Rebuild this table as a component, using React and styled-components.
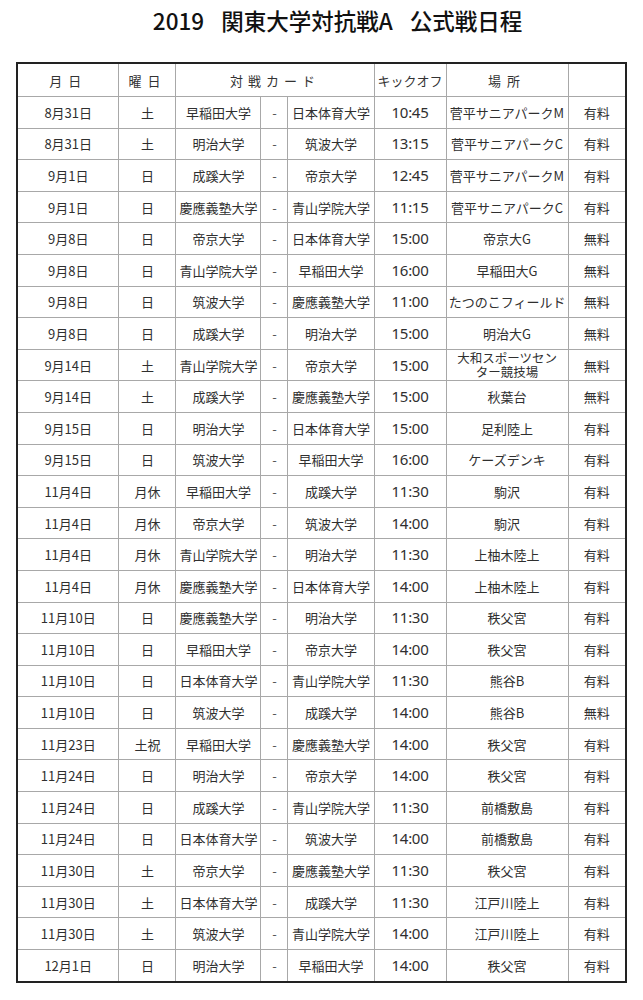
import React from 'react';
import styled, { createGlobalStyle } from 'styled-components';

const GlobalStyle = createGlobalStyle`
  body {
    margin: 0;
    background: #fff;
    font-family: "Noto Sans CJK JP", "Noto Sans", sans-serif;
    color: #2a2a2a;
  }
`;

const Page = styled.div`
  padding-top: 7px;
`;

const Title = styled.h1`
  margin: 0 0 28px 0;
  padding-left: 32px;
  text-align: center;
  font-size: 22.5px;
  line-height: 27px;
  font-weight: 500;
  color: #111;
  white-space: nowrap;
`;

const Gap = styled.span`
  display: inline-block;
  width: 17px;
`;

const Table = styled.table`
  margin: 0 auto;
  width: 609px;
  border-collapse: collapse;
  table-layout: fixed;
  border: 2px solid #222;
  font-size: 13px;
`;

const HeadCell = styled.th`
  height: 32px;
  padding: 0;
  font-weight: 400;
  border: 1px solid #a8a8a8;
  text-align: center;
  color: #333;
  letter-spacing: ${(p) => p.$spread || 0};
  white-space: nowrap;
`;

const Cell = styled.td`
  height: 30.6px;
  padding: 0;
  border: 1px solid #a8a8a8;
  text-align: center;
  white-space: nowrap;
  line-height: 15px;
  color: #2f2f2f;
`;

const Time = styled(Cell)`
  font-family: "Noto Sans", sans-serif;
  font-size: 15px;
  letter-spacing: -0.3px;
`;

const Dash = styled(Cell)`
  color: #555;
`;

const Place = styled(Cell)`
  font-size: ${(p) => (p.$twoLine ? '12.5px' : '13px')};
  line-height: ${(p) => (p.$twoLine ? '14.5px' : '15px')};
`;

const cols = [102, 57, 85, 27, 86, 72, 122, 58];

const matches = [
  ['8月31日', '土', '早稲田大学', '日本体育大学', '10:45', '菅平サニアパークM', '有料'],
  ['8月31日', '土', '明治大学', '筑波大学', '13:15', '菅平サニアパークC', '有料'],
  ['9月1日', '日', '成蹊大学', '帝京大学', '12:45', '菅平サニアパークM', '有料'],
  ['9月1日', '日', '慶應義塾大学', '青山学院大学', '11:15', '菅平サニアパークC', '有料'],
  ['9月8日', '日', '帝京大学', '日本体育大学', '15:00', '帝京大G', '無料'],
  ['9月8日', '日', '青山学院大学', '早稲田大学', '16:00', '早稲田大G', '無料'],
  ['9月8日', '日', '筑波大学', '慶應義塾大学', '11:00', 'たつのこフィールド', '無料'],
  ['9月8日', '日', '成蹊大学', '明治大学', '15:00', '明治大G', '無料'],
  ['9月14日', '土', '青山学院大学', '帝京大学', '15:00', ['大和スポーツセン', 'ター競技場'], '無料'],
  ['9月14日', '土', '成蹊大学', '慶應義塾大学', '15:00', '秋葉台', '無料'],
  ['9月15日', '日', '明治大学', '日本体育大学', '15:00', '足利陸上', '有料'],
  ['9月15日', '日', '筑波大学', '早稲田大学', '16:00', 'ケーズデンキ', '有料'],
  ['11月4日', '月休', '早稲田大学', '成蹊大学', '11:30', '駒沢', '有料'],
  ['11月4日', '月休', '帝京大学', '筑波大学', '14:00', '駒沢', '有料'],
  ['11月4日', '月休', '青山学院大学', '明治大学', '11:30', '上柚木陸上', '有料'],
  ['11月4日', '月休', '慶應義塾大学', '日本体育大学', '14:00', '上柚木陸上', '有料'],
  ['11月10日', '日', '慶應義塾大学', '明治大学', '11:30', '秩父宮', '有料'],
  ['11月10日', '日', '早稲田大学', '帝京大学', '14:00', '秩父宮', '有料'],
  ['11月10日', '日', '日本体育大学', '青山学院大学', '11:30', '熊谷B', '有料'],
  ['11月10日', '日', '筑波大学', '成蹊大学', '14:00', '熊谷B', '無料'],
  ['11月23日', '土祝', '早稲田大学', '慶應義塾大学', '14:00', '秩父宮', '有料'],
  ['11月24日', '日', '明治大学', '帝京大学', '14:00', '秩父宮', '有料'],
  ['11月24日', '日', '成蹊大学', '青山学院大学', '11:30', '前橋敷島', '有料'],
  ['11月24日', '日', '日本体育大学', '筑波大学', '14:00', '前橋敷島', '有料'],
  ['11月30日', '土', '帝京大学', '慶應義塾大学', '11:30', '秩父宮', '有料'],
  ['11月30日', '土', '日本体育大学', '成蹊大学', '11:30', '江戸川陸上', '有料'],
  ['11月30日', '土', '筑波大学', '青山学院大学', '14:00', '江戸川陸上', '有料'],
  ['12月1日', '日', '明治大学', '早稲田大学', '14:00', '秩父宮', '有料'],
];

const App = () => (
  <Page>
    <GlobalStyle />
    <Title>
      2019<Gap />関東大学対抗戦A<Gap />公式戦日程
    </Title>
    <Table>
      <colgroup>
        {cols.map((w, i) => (
          <col key={i} style={{ width: w }} />
        ))}
      </colgroup>
      <thead>
        <tr>
          <HeadCell $spread="6px">月日</HeadCell>
          <HeadCell $spread="6px">曜日</HeadCell>
          <HeadCell colSpan={3} $spread="5px">対戦カード</HeadCell>
          <HeadCell>キックオフ</HeadCell>
          <HeadCell $spread="6px">場所</HeadCell>
          <HeadCell />
        </tr>
      </thead>
      <tbody>
        {matches.map((m, i) => {
          const twoLine = Array.isArray(m[5]);
          return (
            <tr key={i}>
              <Cell>{m[0]}</Cell>
              <Cell>{m[1]}</Cell>
              <Cell>{m[2]}</Cell>
              <Dash>-</Dash>
              <Cell>{m[3]}</Cell>
              <Time>{m[4]}</Time>
              <Place $twoLine={twoLine}>
                {twoLine ? (
                  <>
                    {m[5][0]}
                    <br />
                    {m[5][1]}
                  </>
                ) : (
                  m[5]
                )}
              </Place>
              <Cell>{m[6]}</Cell>
            </tr>
          );
        })}
      </tbody>
    </Table>
  </Page>
);

export default App;
